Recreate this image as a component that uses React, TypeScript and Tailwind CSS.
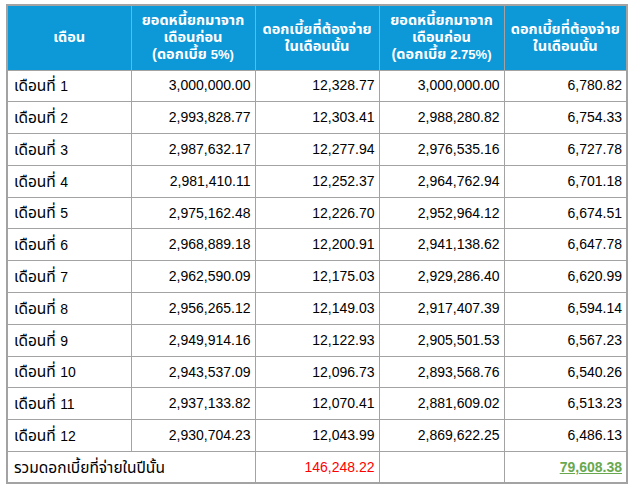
import React from 'react';

const rows: [string, string, string, string][] = [
  ['3,000,000.00', '12,328.77', '3,000,000.00', '6,780.82'],
  ['2,993,828.77', '12,303.41', '2,988,280.82', '6,754.33'],
  ['2,987,632.17', '12,277.94', '2,976,535.16', '6,727.78'],
  ['2,981,410.11', '12,252.37', '2,964,762.94', '6,701.18'],
  ['2,975,162.48', '12,226.70', '2,952,964.12', '6,674.51'],
  ['2,968,889.18', '12,200.91', '2,941,138.62', '6,647.78'],
  ['2,962,590.09', '12,175.03', '2,929,286.40', '6,620.99'],
  ['2,956,265.12', '12,149.03', '2,917,407.39', '6,594.14'],
  ['2,949,914.16', '12,122.93', '2,905,501.53', '6,567.23'],
  ['2,943,537.09', '12,096.73', '2,893,568.76', '6,540.26'],
  ['2,937,133.82', '12,070.41', '2,881,609.02', '6,513.23'],
  ['2,930,704.23', '12,043.99', '2,869,622.25', '6,486.13'],
];

const font = { fontFamily: '"Liberation Sans", "Noto Sans Thai", "Noto Sans", sans-serif' };

const th = 'border border-[#a3a3a3] bg-[#0d98d8] px-1 align-middle text-center text-[14.5px] font-bold leading-[17px] text-white';
const tdLeft = 'border border-[#a3a3a3] pl-[6px] pr-1 text-left text-[15.5px]';
const tdNum = 'border border-[#a3a3a3] pl-1 pr-1 text-right';

export default function App() {
  return (
    <div className="min-h-[491px] w-[633px] bg-white pl-[6px] pt-[4px]" style={font}>
      <table className="w-[620px] table-fixed border-collapse border-2 border-[#a3a3a3] text-[14px] text-black">
        <colgroup>
          <col className="w-[124px]" />
          <col className="w-[124px]" />
          <col className="w-[124px]" />
          <col className="w-[125px]" />
          <col className="w-[123px]" />
        </colgroup>
        <thead>
          <tr className="h-[65px]">
            <th className={th}>เดือน</th>
            <th className={th}>
              ยอดหนี้ยกมาจาก
              <br />
              เดือนก่อน
              <br />
              (ดอกเบี้ย <span className="text-[13px]">5%)</span>
            </th>
            <th className={th}>
              ดอกเบี้ยที่ต้องจ่าย
              <br />
              ในเดือนนั้น
            </th>
            <th className={th}>
              ยอดหนี้ยกมาจาก
              <br />
              เดือนก่อน
              <br />
              (ดอกเบี้ย <span className="text-[13px]">2.75%)</span>
            </th>
            <th className={th}>
              ดอกเบี้ยที่ต้องจ่าย
              <br />
              ในเดือนนั้น
            </th>
          </tr>
        </thead>
        <tbody>
          {rows.map((r, i) => (
            <tr key={i} className="h-[31.8px]">
              <td className={tdLeft}>
                เดือนที่ <span className="text-[14px]">{i + 1}</span>
              </td>
              {r.map((v, j) => (
                <td key={j} className={tdNum}>
                  {v}
                </td>
              ))}
            </tr>
          ))}
          <tr className="h-[31.8px]">
            <td colSpan={2} className={tdLeft}>
              รวมดอกเบี้ยที่จ่ายในปีนั้น
            </td>
            <td className={`${tdNum} text-[#ff0000]`}>146,248.22</td>
            <td className={tdNum}></td>
            <td className={`${tdNum} font-bold text-[#6aa84f] underline`}>79,608.38</td>
          </tr>
        </tbody>
      </table>
    </div>
  );
}
